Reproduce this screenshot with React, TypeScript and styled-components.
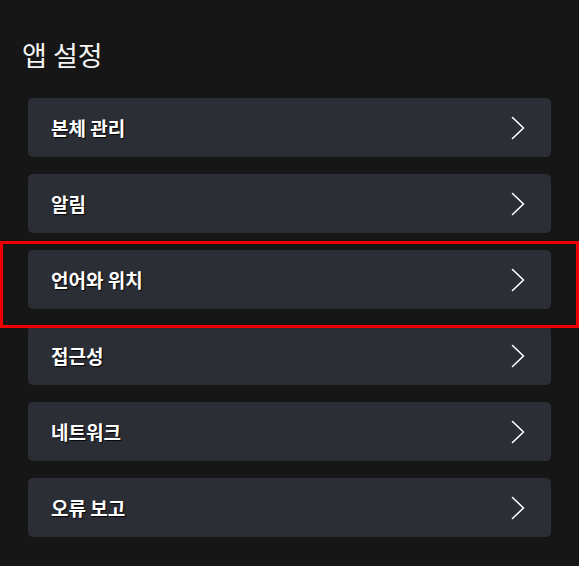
import React from 'react';
import styled, { createGlobalStyle } from 'styled-components';

const GlobalStyle = createGlobalStyle`
  html, body {
    margin: 0;
    padding: 0;
    background-color: #161616;
  }
  body {
    font-family: "Noto Sans CJK KR", "Noto Sans", sans-serif;
    color: #fff;
  }
`

const Page = styled.div`
  width: 579px;
  height: 566px;
  box-sizing: border-box;
  padding-top: 37px;
  background-color: #161616;
  overflow: hidden;
`

const Title = styled.h1`
  margin: 0 0 25px;
  padding-left: 22px;
  font-size: 27px;
  font-weight: 400;
  line-height: 36px;
  color: #f4f4f4;
`

const List = styled.div`
  display: flex;
  flex-direction: column;
  gap: 17px;
  padding: 0 28px;
`

const Row = styled.div`
  position: relative;
  display: flex;
  align-items: center;
  justify-content: space-between;
  height: 59px;
  padding: 0 26px 0 23px;
  background-color: #2c2e36;
  border-radius: 5px;
`

const Highlight = styled.div`
  position: absolute;
  z-index: 2;
  top: -9px;
  bottom: -19px;
  left: -28px;
  right: -28px;
  border: 3px solid #f00000;
  pointer-events: none;
`

const Label = styled.span`
  font-size: 19px;
  font-weight: 700;
  color: #fff;
  text-shadow: 1px 1px 1px rgba(0, 0, 0, 0.9);
`

const Chevron = () => (
  <svg width="14" height="24" viewBox="0 0 14 24" fill="none">
    <path d="M1.5 1.5 L12.5 12 L1.5 22.5" stroke="#fff" strokeWidth="1.6" strokeLinecap="round" strokeLinejoin="round" />
  </svg>
)

const ITEMS = ['본체 관리', '알림', '언어와 위치', '접근성', '네트워크', '오류 보고']

export default function App() {
  return (
    <Page>
      <GlobalStyle />
      <Title>앱 설정</Title>
      <List>
        {ITEMS.map((item, i) => (
          <Row key={item}>
            <Label>{item}</Label>
            <Chevron />
            {i === 2 && <Highlight />}
          </Row>
        ))}
      </List>
    </Page>
  )
}
